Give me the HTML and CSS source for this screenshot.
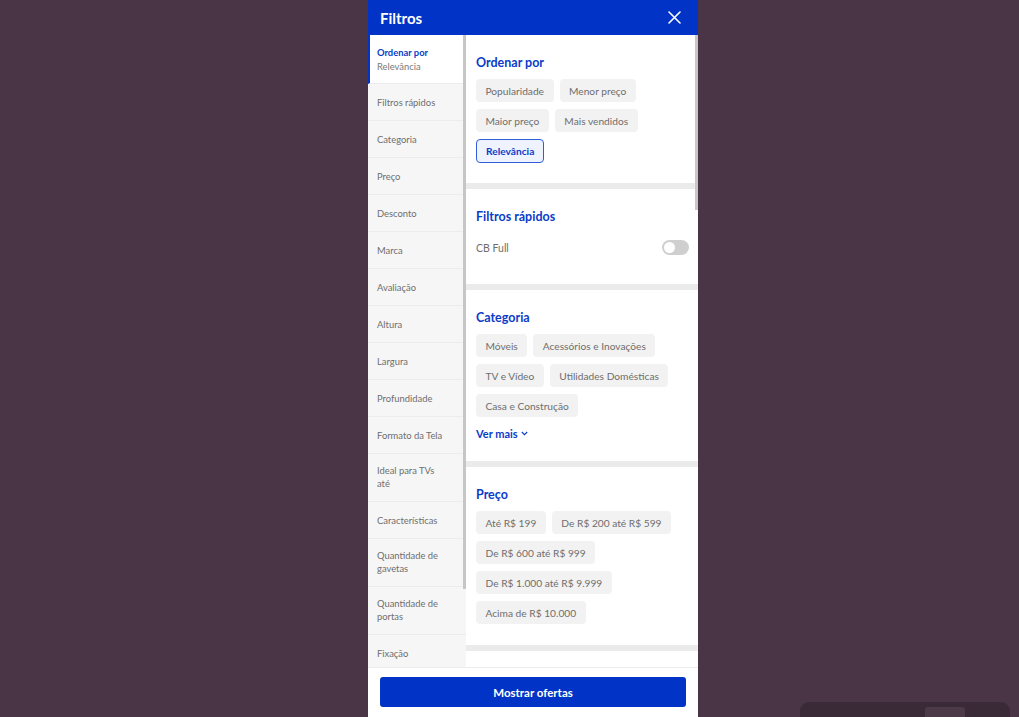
FILE: index.html
```html
<!DOCTYPE html>
<html lang="pt-BR">
<head>
<meta charset="utf-8">
<title>Filtros</title>
<link rel="stylesheet" href="styles.css">
</head>
<body>
<div class="overlay">
  <div class="modal">
    <header class="modal-head">
      <h1 class="modal-title">Filtros</h1>
      <button class="close" aria-label="Fechar">
        <svg width="13" height="13" viewBox="0 0 13 13"><path d="M1 1L12 12M12 1L1 12" stroke="#fff" stroke-width="1.6" stroke-linecap="round"/></svg>
      </button>
    </header>
    <div class="modal-body">
      <nav class="sidebar">
        <div class="side-item active"><span class="side-active-title">Ordenar por</span><span class="side-sub">Relevância</span></div>
        <div class="side-item">Filtros rápidos</div>
        <div class="side-item">Categoria</div>
        <div class="side-item">Preço</div>
        <div class="side-item">Desconto</div>
        <div class="side-item">Marca</div>
        <div class="side-item">Avaliação</div>
        <div class="side-item">Altura</div>
        <div class="side-item">Largura</div>
        <div class="side-item">Profundidade</div>
        <div class="side-item">Formato da Tela</div>
        <div class="side-item two">Ideal para TVs<br>até</div>
        <div class="side-item">Características</div>
        <div class="side-item two">Quantidade de<br>gavetas</div>
        <div class="side-item two">Quantidade de<br>portas</div>
        <div class="side-item last">Fixação</div>
        <div class="side-thumb"></div>
      </nav>
      <main class="content">
        <section class="sec sec-order">
          <h2 class="sec-title">Ordenar por</h2>
          <div class="chips">
            <span class="chip">Popularidade</span>
            <span class="chip">Menor preço</span>
            <span class="chip">Maior preço</span>
            <span class="chip">Mais vendidos</span>
            <span class="chip selected">Relevância</span>
          </div>
        </section>
        <section class="sec sec-quick">
          <h2 class="sec-title">Filtros rápidos</h2>
          <div class="toggle-row">
            <span class="toggle-label">CB Full</span>
            <span class="toggle"><span class="knob"></span></span>
          </div>
        </section>
        <section class="sec sec-cat">
          <h2 class="sec-title">Categoria</h2>
          <div class="chips">
            <span class="chip">Móveis</span>
            <span class="chip">Acessórios e Inovações</span>
            <span class="chip">TV e Vídeo</span>
            <span class="chip">Utilidades Domésticas</span>
            <span class="chip">Casa e Construção</span>
          </div>
          <a class="more">Ver mais <svg width="7" height="5" viewBox="0 0 7 5"><path d="M0.8 1L3.5 3.7L6.2 1" fill="none" stroke="#0a3cc8" stroke-width="1.1"/></svg></a>
        </section>
        <section class="sec sec-price">
          <h2 class="sec-title">Preço</h2>
          <div class="chips">
            <span class="chip">Até R$ 199</span>
            <span class="chip">De R$ 200 até R$ 599</span>
            <span class="chip">De R$ 600 até R$ 999</span>
            <span class="chip">De R$ 1.000 até R$ 9.999</span>
            <span class="chip">Acima de R$ 10.000</span>
          </div>
        </section>
        <section class="sec sec-next"></section>
        <div class="content-thumb"></div>
      </main>
    </div>
    <footer class="modal-foot">
      <button class="cta">Mostrar ofertas</button>
    </footer>
  </div>
  <div class="toast"><span class="toast-btn"></span></div>
</div>
</body>
</html>
```
FILE: styles.css
```css
* { box-sizing: border-box; }
html, body { margin: 0; padding: 0; height: 100%; }
body {
  background: #4a3546;
  font-family: Lato, "Noto Sans", sans-serif;
  overflow: hidden;
}
.overlay {
  position: relative;
  height: 717px;
  display: flex;
  padding-left: 368px;
}
.modal {
  width: 330px;
  height: 717px;
  background: #fff;
  display: flex;
  flex-direction: column;
}
.modal-head {
  height: 35px;
  flex: none;
  background: #0033c6;
  display: flex;
  align-items: center;
  justify-content: space-between;
  padding: 0 17px 0 12px;
}
.modal-title {
  margin: 0;
  color: #fff;
  font-size: 15px;
  font-weight: 700;
}
.close {
  background: none;
  border: 0;
  padding: 0;
  display: flex;
  margin-top: -1px;
}
.modal-body {
  flex: 1;
  display: flex;
  min-height: 0;
  border-bottom: 1px solid #ececec;
}
.sidebar {
  position: relative;
  width: 98px;
  flex: none;
  background: #f6f6f6;
  display: flex;
  flex-direction: column;
  overflow: hidden;
}
.side-item {
  height: 37px;
  flex: none;
  padding: 0 8px 0 9px;
  display: flex;
  flex-direction: column;
  justify-content: center;
  font-size: 9.4px;
  line-height: 13px;
  color: #6e6e6e;
  border-bottom: 1px solid #ececec;
}
.side-item.two { height: 48px; display: block; padding-top: 10px; }
.side-item.active {
  height: 49px;
  background: #fff;
  border-left: 2px solid #0033c6;
  padding-left: 7px;
}
.side-active-title { color: #0a3cc8; font-weight: 700; }
.side-sub { color: #7a7a7a; margin-top: 1px; }
.side-item.last { border-bottom: 0; }
.side-thumb {
  position: absolute;
  top: 0;
  right: 0;
  width: 3px;
  height: 554px;
  background: #c6c6c6;
}
.content {
  position: relative;
  flex: 1;
  background: #ebebeb;
  display: flex;
  flex-direction: column;
  gap: 6px;
  overflow: hidden;
}
.sec {
  background: #fff;
  padding: 20px 10px 0 10px;
  flex: none;
}
.sec-title {
  margin: 0 0 8px;
  font-size: 12.5px;
  line-height: 16px;
  font-weight: 700;
  color: #0a3cc8;
}
.chips {
  display: flex;
  flex-wrap: wrap;
  gap: 7px 6px;
}
.chip {
  height: 23px;
  padding: 0 9.5px;
  background: #f2f2f2;
  border-radius: 4px;
  font-size: 10.2px;
  color: #6e6e6e;
  display: flex;
  align-items: center;
  white-space: nowrap;
}
.chip.selected {
  height: 24px;
  background: #eef3ff;
  border: 1px solid #2f5fd6;
  color: #0a3cc8;
  font-weight: 700;
  padding: 0 9px;
}
.sec-order { height: 148px; }
.sec-quick { height: 95px; }
.sec-cat { height: 171px; }
.sec-price { height: 178px; }
.sec-next { flex: 1; }
.toggle-row {
  display: flex;
  align-items: center;
  justify-content: space-between;
  margin-top: 15px;
}
.toggle-label { font-size: 10.5px; color: #6e6e6e; }
.toggle {
  width: 27px;
  height: 15px;
  border-radius: 8px;
  background: #cfcfcf;
  position: relative;
  margin-right: -1px;
}
.knob {
  position: absolute;
  top: 2px;
  left: 2px;
  width: 11px;
  height: 11px;
  border-radius: 50%;
  background: #fff;
}
.more {
  display: inline-flex;
  align-items: center;
  gap: 3px;
  margin-top: 10px;
  font-size: 11px;
  font-weight: 700;
  color: #0a3cc8;
}
.content-thumb {
  position: absolute;
  top: 0;
  right: 0;
  width: 3px;
  height: 175px;
  background: #c6c6c6;
}
.modal-foot {
  height: 49px;
  flex: none;
  padding: 9px 12px 0;
}
.cta {
  width: 100%;
  height: 30px;
  border: 0;
  border-radius: 3px;
  background: #0033c6;
  color: #fff;
  font-family: Lato, "Noto Sans", sans-serif;
  font-weight: 700;
  font-size: 11.5px;
}
.toast {
  position: absolute;
  left: 800px;
  top: 702px;
  width: 210px;
  height: 30px;
  border-radius: 9px;
  background: #3a2a37;
}
.toast-btn {
  position: absolute;
  left: 125px;
  top: 5px;
  width: 40px;
  height: 20px;
  border-radius: 3px;
  background: #4c3a49;
}
```
